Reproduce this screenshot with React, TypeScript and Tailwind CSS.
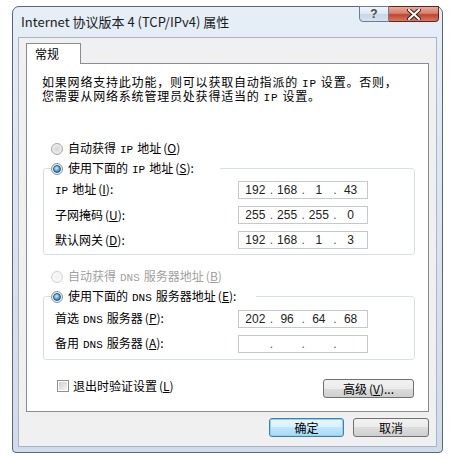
import React from "react";

const Lat = ({ children }: { children: React.ReactNode }) => (
  <span className="font-['Liberation_Mono',monospace] text-[11px] mx-[4px]">{children}</span>
);

const Key = ({ k }: { k: string }) => (
  <span className="ml-[2px]">
    (<span className="underline underline-offset-1">{k}</span>)
  </span>
);

const Radio = ({ on, disabled }: { on?: boolean; disabled?: boolean }) => (
  <span
    className={
      disabled
        ? "w-[12px] h-[12px] rounded-full border border-[#cfcfcf] bg-[radial-gradient(circle_at_50%_50%,#f2f2f2,#fbfbfb)] shrink-0"
        : on
        ? "w-[12px] h-[12px] rounded-full border border-[#8e8f8f] bg-[#f4f4f4] flex items-center justify-center shrink-0"
        : "w-[12px] h-[12px] rounded-full border border-[#a4a4a4] bg-[radial-gradient(circle_at_50%_50%,#d6d6d6,#f7f7f7)] shrink-0"
    }
  >
    {on && (
      <span className="w-[8px] h-[8px] rounded-full border border-[#1f4d78] bg-[radial-gradient(circle_at_40%_35%,#cfeeff,#5fb0e6_45%,#1c5e9c)]" />
    )}
  </span>
);

const IpBox = ({ v }: { v: string[] }) => (
  <div className="w-[130px] h-[18px] border border-[#c5c8cd] bg-white flex items-center px-[2px] font-['Liberation_Sans',sans-serif] text-[12px] text-[#222] leading-[16px]">
    {[0, 1, 2, 3].map((i) => (
      <React.Fragment key={i}>
        <span className="flex-1 text-center">{v[i] ?? ""}</span>
        {i < 3 && <span className="w-[3px] text-center text-[#555]">.</span>}
      </React.Fragment>
    ))}
  </div>
);

const Row = ({ label, v }: { label: React.ReactNode; v: string[] }) => (
  <div className="flex items-center h-[18px]">
    <div className="w-[183px] ml-[4px] leading-[14px]">{label}</div>
    <IpBox v={v} />
  </div>
);

const btn =
  "h-[19px] border border-[#707070] rounded-[3px] bg-[linear-gradient(#f2f2f2,#ebebeb_50%,#dddddd_50%,#cfcfcf)] text-[12px] leading-[16px] text-black";

export default function App() {
  return (
    <div className="w-[459px] h-[463px] bg-white overflow-hidden font-['Noto_Sans_CJK_SC',sans-serif] text-[12px] text-black">
      <div className="ml-[12px] mt-[6px] w-[431px] h-[447px] border border-[#5a6674] rounded-t-[7px] rounded-b-[4px] bg-[linear-gradient(#e6eef7,#dbe6f2_40%,#cfdcec)] flex flex-col px-[5px] pb-[5px]">
        {/* title bar */}
        <div className="h-[30px] flex items-start">
          <div className="flex-1 pl-[3px] h-[30px] flex items-center text-[13px] text-[#1b1b1b] leading-[16px]">
            Internet 协议版本 4 (TCP/IPv4) 属性
          </div>
          <div className="flex -mt-px mr-[-2px]">
            <div className="w-[30px] h-[16px] border border-[#6d7d90] rounded-bl-[4px] bg-[linear-gradient(#f1f5fa,#dde6f1_50%,#c7d5e6_50%,#d6e2ef)] flex items-center justify-center">
              <span className="font-['Liberation_Sans',sans-serif] font-bold text-[12px] leading-[12px] text-[#4a4a4a]">?</span>
            </div>
            <div className="w-[50px] h-[16px] border border-l-0 border-[#5c2a22] rounded-br-[4px] bg-[linear-gradient(#eaa999,#d7806c_45%,#c4432f_55%,#d37b5e)] flex items-center justify-center">
              <svg width="14" height="11" viewBox="0 0 14 11">
                <path d="M2 1 L12 10 M12 1 L2 10" stroke="#3a1a14" strokeWidth="4" strokeLinecap="round" />
                <path d="M2 1 L12 10 M12 1 L2 10" stroke="#ffffff" strokeWidth="2.2" strokeLinecap="round" />
              </svg>
            </div>
          </div>
        </div>

        {/* client area */}
        <div className="flex-1 border border-[#a9b5c2] bg-[#f0f0f0] flex flex-col pt-[5px] pl-[7px] pr-[7px]">
          <div className="flex">
            <div className="relative z-10 -mb-px w-[55px] h-[21px] bg-white border border-b-0 border-[#898c95] pl-[8px] leading-[20px]">
              常规
            </div>
          </div>
          <div className="h-[349px] border border-[#898c95] bg-white flex flex-col pt-[12px] pl-[16px] pr-[13px]">
            <div className="-ml-[1px] leading-[12px] tracking-[0.8px]">
              <div>如果网络支持此功能，则可以获取自动指派的<Lat>IP</Lat>设置。否则，</div>
              <div>您需要从网络系统管理员处获得适当的<Lat>IP</Lat>设置。</div>
            </div>

            <div className="mt-[38px] h-[14px] flex items-center gap-[5px] ml-[8px] leading-[14px]">
              <Radio />
              <span>
                自动获得<Lat>IP</Lat>地址<Key k="O" />
              </span>
            </div>

            <fieldset className="mt-[5px] border border-[#d5dfe5] rounded-[3px] pl-[7px] pb-[5px]">
              <legend className="pr-[26px] h-[14px] leading-[14px]">
                <span className="flex items-center gap-[5px]">
                  <Radio on />
                  <span>
                    使用下面的<Lat>IP</Lat>地址<Key k="S" />:
                  </span>
                </span>
              </legend>
              <div className="mt-[6px] flex flex-col gap-[7px]">
                <Row label={<span><span className="font-['Liberation_Mono',monospace] text-[11px] mr-[4px]">IP</span>地址<Key k="I" />:</span>} v={["192", "168", "1", "43"]} />
                <Row label={<span>子网掩码<Key k="U" />:</span>} v={["255", "255", "255", "0"]} />
                <Row label={<span>默认网关<Key k="D" />:</span>} v={["192", "168", "1", "3"]} />
              </div>
            </fieldset>

            <div className="mt-[15px] h-[14px] flex items-center gap-[5px] ml-[8px] leading-[14px] text-[#a0a0a0]">
              <Radio disabled />
              <span>
                自动获得<Lat>DNS</Lat>服务器地址<Key k="B" />
              </span>
            </div>

            <fieldset className="mt-[5px] border border-[#d5dfe5] rounded-[3px] pl-[7px] pb-[6px]">
              <legend className="pr-[20px] h-[14px] leading-[14px]">
                <span className="flex items-center gap-[5px]">
                  <Radio on />
                  <span>
                    使用下面的<Lat>DNS</Lat>服务器地址<Key k="E" />:
                  </span>
                </span>
              </legend>
              <div className="mt-[7px] flex flex-col gap-[7px]">
                <Row label={<span>首选<Lat>DNS</Lat>服务器<Key k="P" />:</span>} v={["202", "96", "64", "68"]} />
                <Row label={<span>备用<Lat>DNS</Lat>服务器<Key k="A" />:</span>} v={[]} />
              </div>
            </fieldset>

            <div className="mt-[19px] flex items-start">
              <div className="flex items-center gap-[4px] ml-[14px] h-[12px] mt-[1px] leading-[14px]">
                <span className="w-[12px] h-[12px] border border-[#8e8f8f] bg-white p-[1px]">
                  <span className="block w-full h-full bg-[linear-gradient(135deg,#cfcfcf,#f4f4f4)]" />
                </span>
                <span>
                  退出时验证设置<Key k="L" />
                </span>
              </div>
              <div className="flex-1" />
              <button className={btn + " w-[91px] h-[18px] mr-px"}>
                高级<Key k="V" />...
              </button>
            </div>
          </div>

          <div className="mt-[6px] flex justify-end gap-[9px]">
            <button className="h-[19px] w-[75px] border border-[#3c7fb1] rounded-[3px] bg-[linear-gradient(#eaf6fd,#d9f0fc_50%,#bee6fd_50%,#a7d9f5)] text-[12px] leading-[16px] shadow-[inset_0_0_0_1px_#8fd3f3]">
              确定
            </button>
            <button className={btn + " w-[76px]"}>取消</button>
          </div>
        </div>
      </div>
    </div>
  );
}
